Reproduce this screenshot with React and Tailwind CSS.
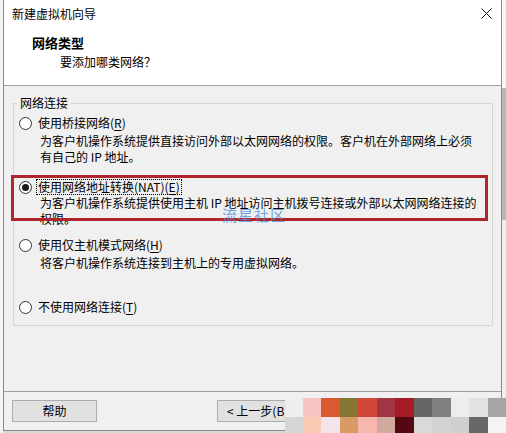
import React from "react";

const FONT = { fontFamily: '"Noto Sans CJK SC", "Microsoft YaHei", sans-serif' };

function Radio({ checked }) {
  return (
    <span className="w-[13px] h-[13px] shrink-0 rounded-full border border-[#333] bg-white flex items-center justify-center">
      {checked && <span className="w-[7px] h-[7px] rounded-full bg-[#1a1a1a]" />}
    </span>
  );
}

function Option({ checked, label, hotkey, lines = [], className = "", descClass = "" }) {
  return (
    <div className={className}>
      <div className="flex items-center h-[16px] gap-[4px]">
        <Radio checked={checked} />
        <span
          className={
            "leading-[14px] px-[1px] " +
            (checked ? "border border-dotted border-black" : "border border-transparent")
          }
        >
          {label}(<span className="underline underline-offset-2">{hotkey}</span>)
        </span>
      </div>
      {lines.map((t, i) => (
        <div key={i} className={"pl-[21px] leading-[16px] h-[16px] whitespace-nowrap " + (i === 0 ? descClass : "")}>
          {t}
        </div>
      ))}
    </div>
  );
}

const row1 = ["#eeeeee", "#f7c6c3", "#d95a2e", "#867535", "#d24838", "#a23645", "#a51b26", "#666666", "#808080", "#ededed", "#e3e3e3", "#a6a6a6"];
const row2 = ["#d6d6d6", "#fcc9b5", "#f3e4ec", "#d99a63", "#f8b7ae", "#cfab9f", "#530813", "#d9d9d9", "#d2d2d2", "#cfcfcf", "#686868", "#f4f4f4"];

export default function App() {
  return (
    <div className="relative w-[506px] h-[433px] overflow-hidden bg-[#dadada] text-[12px] text-black flex" style={FONT}>
      {/* left edge */}
      <div className="w-[3px] h-full bg-[#f4f4f4]" />

      {/* wizard window */}
      <div className="w-[499px] h-[431px] flex flex-col border-l border-r border-b border-[#8a8a8a] bg-[#f0f0f0]">
        {/* title + header */}
        <div className="h-[86px] bg-white border-b border-[#a0a0a0] flex flex-col">
          <div className="h-[27px] flex items-center justify-between pl-[8px] pr-[9px]">
            <span>新建虚拟机向导</span>
            <svg width="11" height="11" viewBox="0 0 11 11">
              <path d="M0.5 0.5 L10.5 10.5 M10.5 0.5 L0.5 10.5" stroke="#111" strokeWidth="1" />
            </svg>
          </div>
          <div className="mt-[8px] pl-[28px] leading-[16px] font-bold text-[13px]">网络类型</div>
          <div className="mt-[3px] pl-[56px] leading-[16px]">要添加哪类网络？</div>
        </div>

        {/* content */}
        <div className="h-[305px] pt-[17px] pl-[9px] pr-[8px]">
          <div className="border border-[#d5d5d5] pl-[5px] pb-[10px]">
            <div className="-mt-[9px] ml-[-2px] px-[3px] w-fit leading-[16px] bg-[#f0f0f0]">网络连接</div>
            <Option
              className="mt-[4px]"
              label="使用桥接网络"
              hotkey="R"
              descClass="mt-[2px]"
              lines={[
                "为客户机操作系统提供直接访问外部以太网网络的权限。客户机在外部网络上必须",
                "有自己的 IP 地址。",
              ]}
            />
            <Option
              className="mt-[14px]"
              checked
              label="使用网络地址转换(NAT)"
              hotkey="E"
              lines={[
                "为客户机操作系统提供使用主机 IP 地址访问主机拨号连接或外部以太网网络连接的",
                "权限。",
              ]}
            />
            <Option
              className="mt-[10px]"
              label="使用仅主机模式网络"
              hotkey="H"
              descClass="mt-[2px]"
              lines={["将客户机操作系统连接到主机上的专用虚拟网络。"]}
            />
            <Option className="mt-[28px]" label="不使用网络连接" hotkey="T" />
          </div>
        </div>

        {/* footer */}
        <div className="flex-1 border-t border-[#a0a0a0] pt-[8px] pl-[8px] flex items-start">
          <button className="w-[85px] h-[22px] bg-[#e1e1e1] border border-[#adadad] leading-[20px]">帮助</button>
          <button className="ml-[120px] w-[75px] h-[22px] bg-[#e1e1e1] border border-[#adadad] leading-[20px] text-left pl-[9px] whitespace-nowrap overflow-hidden">
            &lt; 上一步(B)
          </button>
        </div>
      </div>

      {/* right edge strip */}
      <div className="flex-1 flex flex-col">
        <div className="h-[88px] bg-[#f7f7f7]" />
        <div className="h-[132px] bg-[#b8b8b8]" />
        <div className="flex-1 bg-[#efefef]" />
      </div>

      {/* red annotation box */}
      <div className="absolute left-[11px] top-[175px] w-[477px] h-[46px] border-[3px] border-[#b0262b]" />

      {/* watermark */}
      <div className="absolute left-[222px] top-[206px] text-[15px] leading-[18px] tracking-[1px] text-[#4d90e0]/80">
        流星社区
      </div>

      {/* pixelated mosaic */}
      <div className="absolute left-[285px] top-[398px] right-0 bottom-0 flex flex-col">
        <div className="h-[19px] flex">
          {row1.map((c, i) => (
            <div key={i} className={i === 0 ? "w-[18px]" : "w-[19px]"} style={{ background: c }} />
          ))}
        </div>
        <div className="flex-1 flex">
          {row2.map((c, i) => (
            <div key={i} className={i === 0 ? "w-[18px]" : "w-[19px]"} style={{ background: c }} />
          ))}
        </div>
      </div>
    </div>
  );
}
